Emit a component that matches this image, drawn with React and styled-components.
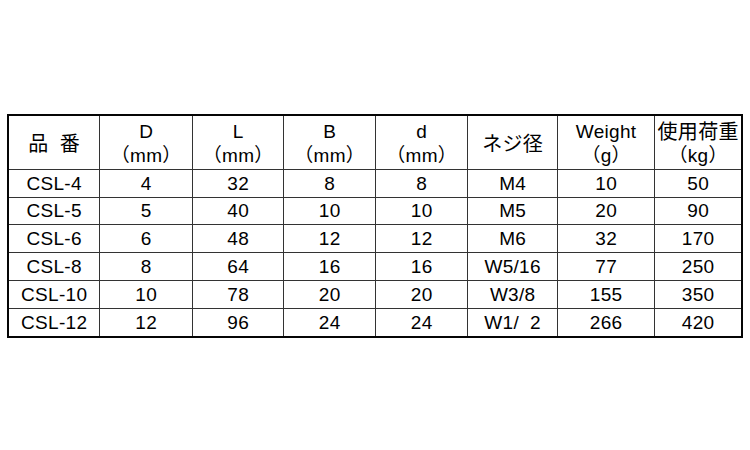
import React from "react";
import styled, { createGlobalStyle } from "styled-components";

const GlobalStyle = createGlobalStyle`
  html, body {
    margin: 0;
    padding: 0;
    background: #fff;
  }
  body {
    font-family: "Liberation Sans", Arial, "Noto Sans CJK JP", sans-serif;
    color: #000;
  }
`;

const columns = [91, 93, 91, 92, 92, 90, 97, 86];

const headers = [
  ["品 番"],
  ["D", "（mm）"],
  ["L", "（mm）"],
  ["B", "（mm）"],
  ["d", "（mm）"],
  ["ネジ径"],
  ["Weight", "（g）"],
  ["使用荷重", "（kg）"],
];

const cjk = ["品 番", "ネジ径", "使用荷重"];

const rows = [
  ["CSL-4", "4", "32", "8", "8", "M4", "10", "50"],
  ["CSL-5", "5", "40", "10", "10", "M5", "20", "90"],
  ["CSL-6", "6", "48", "12", "12", "M6", "32", "170"],
  ["CSL-8", "8", "64", "16", "16", "W5/16", "77", "250"],
  ["CSL-10", "10", "78", "20", "20", "W3/8", "155", "350"],
  ["CSL-12", "12", "96", "24", "24", "W1/  2", "266", "420"],
];

const Page = styled.div`
  padding: 114px 0 0 7px;
`;

const Frame = styled.div`
  box-sizing: border-box;
  width: 736px;
  height: 224px;
  border: 2px solid #050505;
  display: grid;
  grid-template-columns: ${columns.map((w) => `${w}px`).join(" ")};
  grid-template-rows: 54px 28px 27px 28px 28px 28px 27px;
`;

const Cell = styled.div`
  box-sizing: border-box;
  display: flex;
  flex-direction: column;
  align-items: center;
  justify-content: center;
  border-right: ${(p) => (p.$lastCol ? "none" : "1px solid #333")};
  border-bottom: ${(p) => (p.$lastRow ? "none" : "1px solid #333")};
  font-size: 19px;
  line-height: 24px;
  white-space: pre;
`;

const HeadCell = styled(Cell)`
  padding-top: 2px;
`;

const Text = styled.span`
  font-size: ${(p) => (p.$cjk ? 20 : 19)}px;
  letter-spacing: ${(p) => (p.$wide ? 3 : 0.3)}px;
  padding-left: ${(p) => (p.$wide ? 3 : 0.3)}px;
`;

export default function App() {
  return (
    <>
      <GlobalStyle />
      <Page>
        <Frame>
          {headers.map((lines, i) => (
            <HeadCell key={`h${i}`} $lastCol={i === headers.length - 1}>
              {lines.map((t) => (
                <Text key={t} $cjk={cjk.includes(t)} $wide={t === "品 番"}>
                  {t}
                </Text>
              ))}
            </HeadCell>
          ))}
          {rows.map((row, r) =>
            row.map((v, c) => (
              <Cell
                key={`${r}-${c}`}
                $lastCol={c === row.length - 1}
                $lastRow={r === rows.length - 1}
              >
                <Text>{v}</Text>
              </Cell>
            ))
          )}
        </Frame>
      </Page>
    </>
  );
}
